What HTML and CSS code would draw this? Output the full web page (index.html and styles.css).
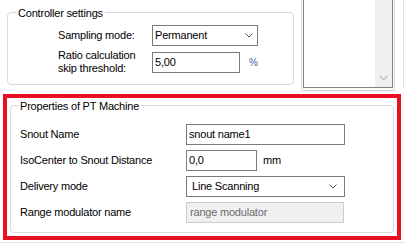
FILE: index.html
```html
<!DOCTYPE html>
<html>
<head>
<meta charset="utf-8">
<link rel="stylesheet" href="styles.css">
</head>
<body>
<div class="top">
  <fieldset class="group ctrl">
    <legend>Controller settings</legend>
    <div class="ctrl-grid">
      <span class="lbl">Sampling mode:</span>
      <div class="field select w106"><span>Permanent</span><svg class="chev" viewBox="0 0 8 5"><polyline points="0.5,0.5 4,4 7.5,0.5"/></svg></div>
      <span class="lbl two">Ratio calculation<br>skip threshold:</span>
      <div class="with-unit"><div class="field w88">5,00</div><span class="pct">%</span></div>
    </div>
  </fieldset>
  <div class="listpanel">
    <div class="listbox">
      <div class="vscroll"><svg class="schev" viewBox="0 0 9 6"><polyline points="0.5,0.8 4.5,4.8 8.5,0.8"/></svg></div>
    </div>
  </div>
  <div class="edge"></div>
</div>
<div class="redbox">
  <fieldset class="group props">
    <legend>Properties of PT Machine</legend>
    <div class="props-grid">
      <span class="lbl">Snout Name</span>
      <div class="field w159">snout name1</div>
      <span class="lbl">IsoCenter to Snout Distance</span>
      <div class="with-unit"><div class="field w71">0,0</div><span class="unit">mm</span></div>
      <span class="lbl">Delivery mode</span>
      <div class="field select combo w159"><span>Line Scanning</span><svg class="chev" viewBox="0 0 8 5"><polyline points="0.5,0.5 4,4 7.5,0.5"/></svg></div>
      <span class="lbl">Range modulator name</span>
      <div class="field disabled w158">range modulator</div>
    </div>
  </fieldset>
</div>
<div class="bottom-line"></div>
</body>
</html>
```
FILE: styles.css
```css
* { box-sizing: border-box; }
html, body { margin: 0; padding: 0; }
body {
  width: 405px;
  height: 243px;
  overflow: hidden;
  background: #fff;
  color: #000;
  font-family: "Liberation Sans", Arial, sans-serif;
  font-size: 11px;
  line-height: 13px;
  letter-spacing: -0.2px;
}
.top {
  display: flex;
  align-items: flex-start;
  height: 91px;
}
.group {
  border: 1px solid #d9d9d9;
  border-radius: 4px;
  padding: 0;
  margin: 0;
  min-width: 0;
}
.group legend {
  padding: 1px 2px 0;
  margin-left: 8px;
  line-height: 12px;
}
.ctrl {
  margin: 6px 0 0 7px;
  width: 287px;
  height: 79px;
}
.ctrl-grid {
  display: grid;
  grid-template-columns: 94px auto;
  row-gap: 3px;
  align-items: center;
  padding: 6px 0 0 50px;
}
.lbl { white-space: nowrap; }
.two { line-height: 13px; }
.field {
  height: 21px;
  border: 1px solid #7a7a7a;
  background: #fff;
  display: flex;
  align-items: center;
  padding: 0 0 0 2px;
  white-space: nowrap;
}
.select {
  justify-content: space-between;
  padding-right: 4px;
}
.combo { padding-left: 5px; padding-right: 7px; }
.chev { width: 8px; height: 5px; }
.chev polyline { fill: none; stroke: #555; stroke-width: 1; }
.w106 { width: 106px; }
.w88 { width: 88px; }
.w159 { width: 159px; }
.w158 { width: 158px; }
.w71 { width: 71px; }
.with-unit { display: flex; align-items: center; }
.pct { margin-left: 9px; color: #3a5f9e; font-size: 10px; }
.unit { margin-left: 6px; }
.disabled {
  background: #f0f0f0;
  border-color: #cccccc;
  color: #6d6d6d;
  padding-left: 3px;
}
.listpanel {
  margin-left: 7px;
  width: 94px;
  height: 91px;
  border: 1px solid #d9d9d9;
  border-top: none;
  border-radius: 0 0 3px 3px;
  padding: 0 1px 2px;
}
.listbox {
  height: 100%;
  border: 1px solid #828282;
  border-top: none;
  display: flex;
  justify-content: flex-end;
}
.vscroll {
  width: 17px;
  background: #f0f0f0;
  display: flex;
  align-items: flex-end;
  justify-content: center;
  padding-bottom: 6px;
}
.schev { width: 9px; height: 6px; }
.schev polyline { fill: none; stroke: #c2c2c2; stroke-width: 1.5; }
.edge {
  margin-left: 8px;
  width: 1px;
  height: 88px;
  background: #e3e3e3;
}
.redbox {
  margin: 3px 0 0 3px;
  width: 398px;
  height: 146px;
  border: 4px solid #e81123;
  padding: 1px 3px 3px 3px;
  display: flex;
}
.props {
  flex: 1;
}
.props legend { margin-left: 7px; }
.props-grid {
  display: grid;
  grid-template-columns: 166px auto;
  row-gap: 5px;
  align-items: center;
  padding: 12px 0 0 9px;
}
.bottom-line {
  margin-top: 2px;
  height: 1px;
  background: #e3e3e3;
}
```
